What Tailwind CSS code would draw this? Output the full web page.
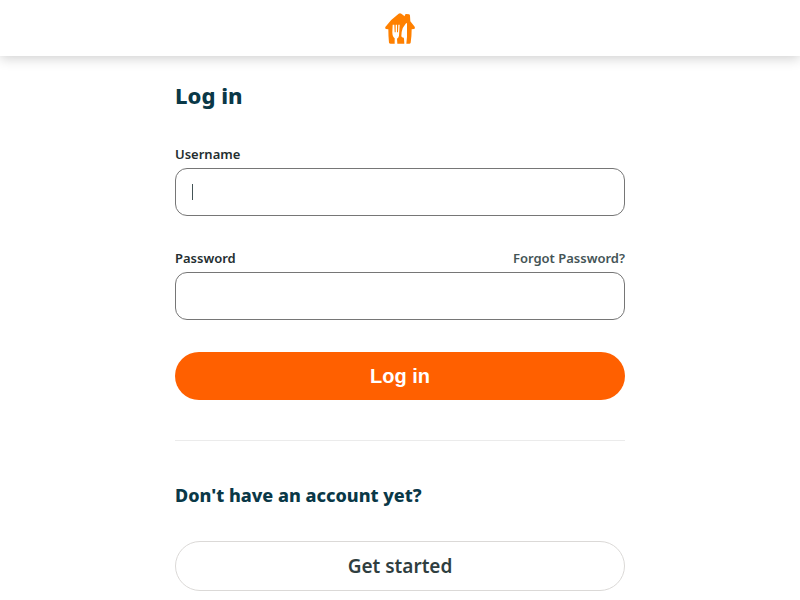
<!DOCTYPE html>
<html lang="en">
<head>
<meta charset="utf-8">
<meta name="viewport" content="width=device-width, initial-scale=1">
<title>Log in</title>
<script src="https://cdn.jsdelivr.net/npm/@tailwindcss/browser@4"></script>
</head>
<body class="bg-white font-['Noto_Sans','Open_Sans',sans-serif] text-[#242e30]">
<header class="flex h-14 items-center justify-center bg-white shadow-[0_2px_12px_rgba(0,0,0,0.2)]">
  <a href="#" aria-label="Home">
    <svg class="size-10" viewBox="0 0 120 120" fill="#ff8000" aria-hidden="true">
      <path d="M56 17Q60 14 64 17L74 25L75 20Q76 18 79 18L87 19Q90 20 90 23L91 40L104 56Q107 61 102 63L95 64Q95 85 92 104Q91 107 88 107L79 107L81 86L81 48Q81 43 77 47Q67 58 65 72L64 85Q65 89 71 89L72 92L73 107L52 107L51 92Q56 89 57 83L59 50L55 50L54 73L51 73L51 50L47 50L47 73L44 73L43 50L38 50L37 73Q37 86 44 91L44 107L32 107Q28 107 27 104Q25 85 25 64L18 63Q14 61 16 57Q32 34 56 17Z"/>
    </svg>
  </a>
</header>
<main class="mx-auto w-full max-w-[482px] px-4 pt-6">
  <h1 class="text-[22px] leading-[30px] font-extrabold text-[#0a3847]">Log in</h1>
  <form class="pt-[34px]">
    <label for="username" class="block text-[13px] leading-5 font-semibold">Username</label>
    <div class="relative mt-1">
      <input id="username" name="username" type="text" autofocus class="block h-12 w-full rounded-xl border border-[#767676] px-4 text-base caret-transparent outline-none">
      <span class="pointer-events-none absolute top-4 left-[17px] h-4 w-px bg-[#445456]" aria-hidden="true"></span>
    </div>
    <div class="mt-8 flex justify-between text-[13px] leading-5 font-semibold">
      <label for="password">Password</label>
      <a href="#" class="text-[#445456]">Forgot Password?</a>
    </div>
    <input id="password" name="password" type="password" class="mt-1 block h-12 w-full rounded-xl border border-[#767676] px-4 text-base outline-none">
    <button type="submit" class="mt-8 block h-12 w-full rounded-full bg-[#ff6000] font-['Liberation_Sans',Arial,sans-serif] text-xl font-bold text-white">Log in</button>
  </form>
  <hr class="mt-10 border-[#ebebeb]">
  <h2 class="mt-10 text-lg leading-7 font-extrabold text-[#0a3847]">Don't have an account yet?</h2>
  <button type="button" class="mt-8 block h-[50px] w-full rounded-full border border-[#dbd9d7] text-[19px] font-semibold text-[#2f3e3f]">Get started</button>
</main>
</body>
</html>
